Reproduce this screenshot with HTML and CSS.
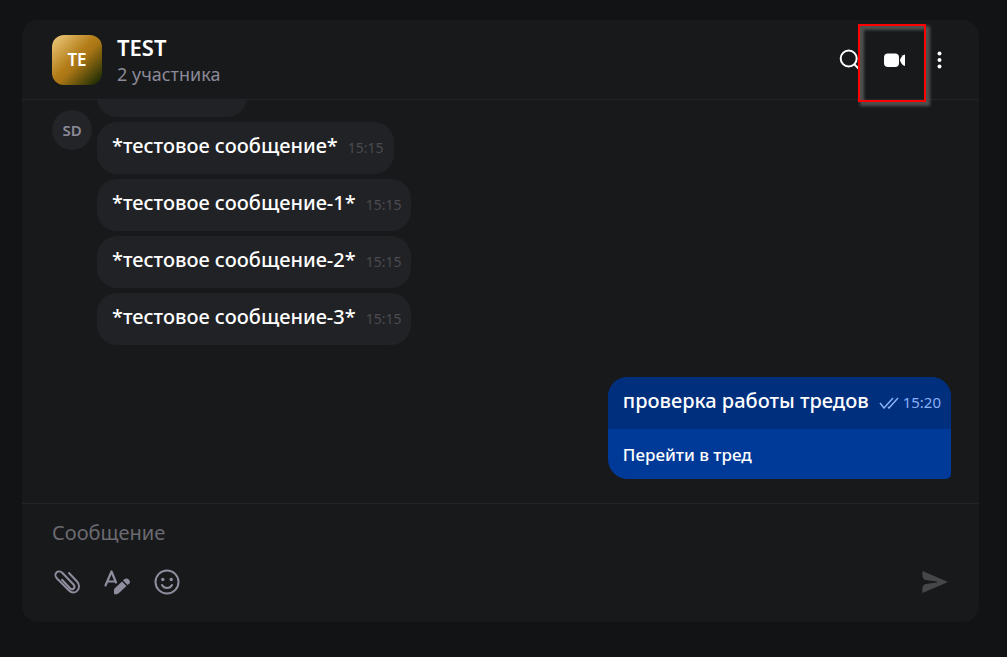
FILE: index.html
```
<!DOCTYPE html>
<html lang="ru">
<head>
  <meta charset="UTF-8">
  <meta name="viewport" content="width=device-width, initial-scale=1.0">
  <title>TEST</title>
  <link rel="stylesheet" href="styles.css">
</head>
<body>
  <main class="chat">
    <header class="chat-header">
      <div class="chat-logo">TE</div>
      <div class="chat-info">
        <h1>TEST</h1>
        <p>2 участника</p>
      </div>
      <div class="chat-actions">
        <button type="button" class="icon-btn" aria-label="Поиск">
          <svg width="24" height="24" viewBox="0 0 24 24" fill="none" stroke="currentColor" stroke-width="2">
            <circle cx="11.700" cy="10.500" r="8"/>
            <path d="M17 16l5 5"/>
          </svg>
        </button>
        <button type="button" class="icon-btn marked" aria-label="Видеозвонок">
          <svg width="24" height="24" viewBox="0 0 24 24" fill="currentColor">
            <rect x="2" y="5.500" width="15" height="13.500" rx="4"/>
            <path d="M18 12.200c0.500-2.500 2.300-5 5-5.700v11.500c-2.700-0.700-4.500-3.300-5-5.800z"/>
          </svg>
        </button>
        <button type="button" class="icon-btn" aria-label="Меню">
          <svg width="24" height="24" viewBox="0 0 24 24" fill="currentColor">
            <circle cx="12.500" cy="5.500" r="2"/>
            <circle cx="12.500" cy="12" r="2"/>
            <circle cx="12.500" cy="18.500" r="2"/>
          </svg>
        </button>
      </div>
    </header>

    <section class="messages">
      <div class="group">
        <div class="avatar">SD</div>
        <div class="bubbles">
          <div class="bubble scrolled"></div>
          <div class="bubble">*тестовое сообщение* <time>15:15</time></div>
          <div class="bubble">*тестовое сообщение-1* <time>15:15</time></div>
          <div class="bubble">*тестовое сообщение-2* <time>15:15</time></div>
          <div class="bubble">*тестовое сообщение-3* <time>15:15</time></div>
        </div>
      </div>
      <div class="own">
        <div class="own-text">
          проверка работы тредов
          <span class="status">
            <svg width="20" height="12" viewBox="0 0 20 12" fill="none" stroke="currentColor" stroke-width="1.500">
              <path d="M1 6l4 5L14 1M9 10l1 1L19 1"/>
            </svg>
            <time>15:20</time>
          </span>
        </div>
        <button type="button" class="thread">Перейти в тред</button>
      </div>
    </section>

    <form class="composer">
      <input type="text" placeholder="Сообщение" aria-label="Сообщение">
      <div class="tools">
        <button type="button" class="icon-btn" aria-label="Прикрепить файл">
          <svg width="30" height="30" viewBox="0 0 30 30" fill="none" stroke="currentColor" stroke-width="2" stroke-linecap="round">
            <path d="M17 6l8 8.500c2.500 2.800 2.500 6.500 0.500 9s-6 2.500-8.500 0L5 11.500c-2-2-2-4.500-0.500-6s4-1.500 6 0.500l11 11.500c1.300 1.500 1.200 3 0.300 4s-2.500 1-3.800-0.300L10 12.800"/>
          </svg>
        </button>
        <button type="button" class="icon-btn" aria-label="Форматирование">
          <svg width="30" height="30" viewBox="0 0 30 30">
            <path d="M3.500 18.500L9.500 4.500L14 15.500M6 14.500h7.500" fill="none" stroke="currentColor" stroke-width="2.200" stroke-linecap="round" stroke-linejoin="round"/>
            <path d="M12.500 21.500l7.500-7 4.500 4.500-7.500 7c-1 1-3 1.500-4.800 1.200-0.300-2-0.500-4.500 0.300-5.700zM21 13.500l1.500-1.500c2.500-2 7 1.500 5 4.500l-2 1.500z" fill="currentColor"/>
          </svg>
        </button>
        <button type="button" class="icon-btn" aria-label="Эмодзи">
          <svg width="30" height="30" viewBox="0 0 30 30" fill="none" stroke="currentColor" stroke-width="2" stroke-linecap="round">
            <circle cx="15" cy="15" r="11.500"/>
            <path d="M10 18c2 4 8 4 10 0"/>
            <circle cx="10.800" cy="12.500" r="1.700" fill="currentColor" stroke="none"/>
            <circle cx="19.200" cy="12.500" r="1.700" fill="currentColor" stroke="none"/>
          </svg>
        </button>
        <button type="submit" class="icon-btn send" aria-label="Отправить">
          <svg width="30" height="30" viewBox="0 0 30 30" fill="currentColor">
            <path d="M1.500 4L27 15 1.500 26c-0.500-6 0.500-8.500 3.500-9L16 15.500v-1L5 13C2 12.500 1 10 1.500 4z"/>
          </svg>
        </button>
      </div>
    </form>
  </main>
</body>
</html>
```
FILE: styles.css
```
*,
*::after {
  box-sizing: border-box;
}
body {
  margin: 0;
  min-height: 100vh;
  display: flex;
  padding: 20px 28px 35px 22px;
  background-color: #121315;
  color: #fff;
  font-family: "Noto Sans", sans-serif;
}
button,
input {
  font-family: inherit;
  border: none;
  background: none;
  padding: 0;
}
button {
  cursor: pointer;
}
svg {
  display: block;
}
.chat {
  flex: 1;
  display: flex;
  flex-direction: column;
  border-radius: 16px;
  background-color: #18191b;
}
.chat-header {
  display: flex;
  align-items: center;
  height: 80px;
  padding: 0 28px 0 30px;
  border-bottom: 1px solid #232427;
}
.chat-logo {
  width: 50px;
  height: 50px;
  margin-right: 15px;
  border-radius: 12px;
  background: linear-gradient(135deg, #f0cd80 0%, #b37d18 45%, #a87515 55%, #1c2c04 95%);
  font-size: 17px;
  font-weight: 600;
  line-height: 50px;
  text-align: center;
}
.chat-info h1 {
  margin: 0;
  font-size: 22px;
  font-weight: 600;
  line-height: 28px;
}
.chat-info p {
  margin: 0;
  color: #8b8a97;
  font-size: 18px;
  line-height: 26px;
}
.chat-actions {
  display: flex;
  gap: 21px;
  margin-left: auto;
}
.icon-btn {
  position: relative;
  color: inherit;
}
/* red frame around the call button */
.marked::after {
  content: "";
  position: absolute;
  top: -24px;
  left: -24px;
  width: 68px;
  height: 78px;
  border: 2px solid #f00;
  box-shadow: 3px 3px 3px 1px #50514f, inset 3px 3px 3px 1px #50514f;
}
.messages {
  flex: 1;
  padding: 0 28px 24px 30px;
  overflow: hidden;
}
.group {
  display: flex;
  gap: 5px;
}
.avatar {
  width: 40px;
  height: 40px;
  margin-top: 10px;
  border-radius: 50%;
  background-color: #232427;
  color: #8b8a97;
  font-size: 15px;
  font-weight: 600;
  line-height: 40px;
  text-align: center;
}
.bubbles {
  display: flex;
  flex-direction: column;
  align-items: flex-start;
  gap: 5px;
}
.bubble {
  display: flex;
  gap: 10px;
  height: 52px;
  padding: 10px 10px 0 15px;
  border-radius: 20px;
  background-color: #212225;
  font-size: 20px;
  font-weight: 500;
  line-height: 28px;
}
.bubble.scrolled {
  width: 150px;
  margin-top: -35px;
}
.bubble time {
  padding-top: 2px;
  color: #4b4b50;
  font-size: 14px;
  font-weight: 400;
}
.own {
  width: fit-content;
  margin: 32px 0 0 auto;
  border-radius: 20px 20px 5px 20px;
  background-color: #003a99;
  overflow: hidden;
}
.own-text {
  display: flex;
  gap: 10px;
  height: 52px;
  padding: 10px 10px 0 15px;
  background-color: #002f7e;
  font-size: 20px;
  font-weight: 500;
  line-height: 28px;
}
.status {
  display: flex;
  align-items: center;
  gap: 4px;
  height: 32px;
  color: #8ab0f5;
  font-size: 15px;
  font-weight: 400;
}
.status time {
  line-height: 24px;
  padding-bottom: 2px;
}
.thread {
  width: 100%;
  height: 50px;
  padding-left: 15px;
  color: #fff;
  font-size: 17px;
  font-weight: 500;
  text-align: left;
}
.composer {
  height: 119px;
  padding: 12px 28px 0 30px;
  border-top: 1px solid #232427;
}
.composer input {
  display: block;
  width: 100%;
  height: 32px;
  color: #fff;
  font-size: 20px;
  outline: none;
}
.composer input::placeholder {
  color: #6b6a70;
}
.tools {
  display: flex;
  gap: 20px;
  margin-top: 19px;
  color: #8f8d9e;
}
.send {
  margin-left: auto;
  color: #464749;
}
```
